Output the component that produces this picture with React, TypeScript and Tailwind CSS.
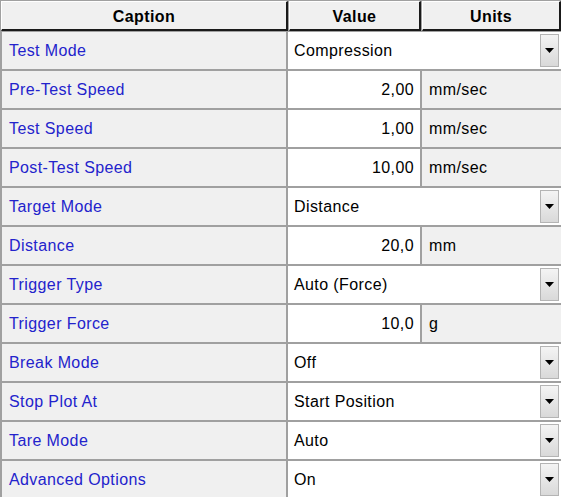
const rows: { caption: string; value: string; units?: string; kind: "select" | "number" }[] = [
  { caption: "Test Mode", value: "Compression", kind: "select" },
  { caption: "Pre-Test Speed", value: "2,00", units: "mm/sec", kind: "number" },
  { caption: "Test Speed", value: "1,00", units: "mm/sec", kind: "number" },
  { caption: "Post-Test Speed", value: "10,00", units: "mm/sec", kind: "number" },
  { caption: "Target Mode", value: "Distance", kind: "select" },
  { caption: "Distance", value: "20,0", units: "mm", kind: "number" },
  { caption: "Trigger Type", value: "Auto (Force)", kind: "select" },
  { caption: "Trigger Force", value: "10,0", units: "g", kind: "number" },
  { caption: "Break Mode", value: "Off", kind: "select" },
  { caption: "Stop Plot At", value: "Start Position", kind: "select" },
  { caption: "Tare Mode", value: "Auto", kind: "select" },
  { caption: "Advanced Options", value: "On", kind: "select" },
];

function DropButton() {
  return (
    <div className="flex h-[33px] w-[19px] items-center justify-center border border-[#b4b4b4] bg-gradient-to-b from-[#f4f4f4] to-[#d9d9d9]">
      <svg width="9" height="5" viewBox="0 0 9 5">
        <path d="M0 0H9L4.5 5Z" fill="#000" />
      </svg>
    </div>
  );
}

function HeaderCell({ label, className }: { label: string; className: string }) {
  return (
    <div
      className={`flex items-center justify-center border-l border-t border-white bg-[#f0f0f0] border-r-2 border-b-2 border-r-[#1a1a1a] border-b-[#1a1a1a] pt-[2px] font-bold text-[16px] tracking-[0.4px] text-black ${className}`}
    >
      {label}
    </div>
  );
}

export default function App() {
  return (
    <div
      className="h-[497px] w-[561px] overflow-hidden bg-[#a0a0a0] pl-[1px] pt-[1px] text-[16px] tracking-[0.4px]"
      style={{ fontFamily: '"Liberation Sans", Arial, sans-serif' }}
    >
      <div className="flex h-[30px] gap-[1px]">
        <HeaderCell label="Caption" className="w-[287px]" />
        <HeaderCell label="Value" className="w-[132px]" />
        <HeaderCell label="Units" className="flex-1" />
      </div>
      <div className="flex flex-col gap-[2px] pl-[1px] pt-[1px]">
        {rows.map((r) => (
          <div key={r.caption} className="flex h-[37px] gap-[2px]">
            <div className="flex w-[284px] items-center bg-[#f0f0f0] pl-[7px] text-[#2323cc]">
              {r.caption}
            </div>
            {r.kind === "select" ? (
              <div className="flex flex-1 items-center bg-white pl-[6px] pr-[2px] text-black">
                <span className="flex-1">{r.value}</span>
                <DropButton />
              </div>
            ) : (
              <>
                <div className="flex w-[132px] items-center justify-end bg-white pr-[6px] text-black">
                  {r.value}
                </div>
                <div className="flex flex-1 items-center bg-[#f0f0f0] pl-[7px] text-black">
                  {r.units}
                </div>
              </>
            )}
          </div>
        ))}
      </div>
    </div>
  );
}
